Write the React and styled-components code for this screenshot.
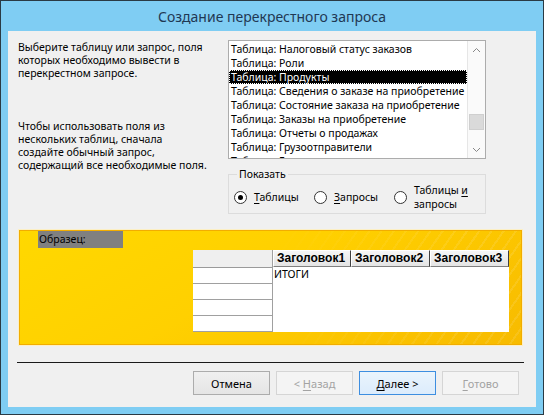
import styled, { createGlobalStyle } from "styled-components";

const GlobalStyle = createGlobalStyle`
  html, body {
    margin: 0;
    padding: 0;
    background: #ffffff;
  }
  body {
    font-family: "Noto Sans", "DejaVu Sans", sans-serif;
  }
`;

const Window = styled.div`
  width: 544px;
  height: 415px;
  box-sizing: border-box;
  border: 1px solid #2a3a44;
  background: #7fcdf3;
  padding: 0 7px 7px 7px;
  display: flex;
  flex-direction: column;
`;

const TitleBar = styled.div`
  height: 30px;
  display: flex;
  align-items: center;
  justify-content: center;
  font-size: 14px;
  color: #1f3853;
  padding-top: 1px;
  box-sizing: border-box;
`;

const Client = styled.div`
  flex: 1;
  background: #f0f0f0;
  display: flex;
  flex-direction: column;
  padding-top: 9px;
  box-sizing: border-box;
  font-size: 10.5px;
  color: #000;
`;

const Top = styled.div`
  display: grid;
  grid-template-columns: 210px 258px;
  padding-left: 10px;
`;

const Hint = styled.p`
  margin: ${(p) => (p.$gap ? "39px" : "0")} 0 0 0;
  line-height: 13px;
  padding-top: 1px;
`;

const RightCol = styled.div`
  display: flex;
  flex-direction: column;
`;

const ListBox = styled.div`
  height: 119px;
  box-sizing: border-box;
  border: 1px solid #acacac;
  background: #fff;
  display: flex;
  overflow: hidden;
`;

const Items = styled.div`
  flex: 1;
  padding-top: 1px;
  overflow: hidden;
`;

const Item = styled.div`
  height: 14px;
  line-height: 14px;
  padding-left: 2px;
  white-space: nowrap;
  box-sizing: border-box;
  background: ${(p) => (p.$selected ? "#000" : "transparent")};
  color: ${(p) => (p.$selected ? "#fff" : "#000")};
  outline: ${(p) => (p.$selected ? "1px dotted #fff" : "none")};
  outline-offset: -1px;
`;

const ScrollBar = styled.div`
  width: 17px;
  border-left: 1px solid #e6e6e6;
  background: #fafafa;
  display: flex;
  flex-direction: column;
`;

const Arrow = styled.div`
  height: 17px;
  display: flex;
  align-items: center;
  justify-content: center;
  margin-top: ${(p) => (p.$down ? "auto" : "0")};
`;

const Thumb = styled.div`
  height: 16px;
  margin: 56px 1px 0 1px;
  box-sizing: border-box;
  background: #dadada;
  border: 1px solid #cfcfcf;
`;

const GroupBox = styled.fieldset`
  margin: 9px 0 0 0;
  padding: 3px 0 3px 5px;
  border: 1px solid #dcdcdc;
  min-width: 0;
`;

const Legend = styled.legend`
  padding: 0 2px;
  margin-left: 3px;
  line-height: 13px;
  color: #000;
`;

const Options = styled.div`
  display: flex;
  align-items: center;
  height: 26px;
`;

const Option = styled.label`
  width: ${(p) => (p.$wide ? "auto" : "80px")};
  display: flex;
  align-items: center;
  gap: 7px;
  line-height: 14px;
`;

const Radio = styled.span`
  width: 13px;
  height: 13px;
  flex: none;
  box-sizing: border-box;
  border-radius: 50%;
  border: 1px solid #333;
  background: #fff;
  display: flex;
  align-items: center;
  justify-content: center;
  &::after {
    content: "";
    width: 5px;
    height: 5px;
    border-radius: 50%;
    background: ${(p) => (p.$checked ? "#000" : "transparent")};
  }
`;

const U = styled.span`
  text-decoration: underline;
  text-underline-offset: 2px;
`;

const Sample = styled.div`
  position: relative;
  margin: 16px 14px 0 11px;
  height: 115px;
  box-sizing: border-box;
  border: 1px solid #f2ad00;
  box-shadow: 0 0 0 1px #fcefc4;
  background: linear-gradient(150deg, #ffd800 0%, #ffd000 45%, #fbc400 75%, #f7bb00 100%);
  display: flex;
  flex-direction: column;
  &::before {
    content: "";
    position: absolute;
    inset: 0;
    background: repeating-linear-gradient(
      -55deg,
      rgba(255, 255, 255, 0) 0px,
      rgba(255, 255, 255, 0) 8px,
      rgba(255, 255, 255, 0.1) 8px,
      rgba(255, 255, 255, 0.1) 10px
    );
    -webkit-mask-image: linear-gradient(to right, transparent 50%, #000 90%);
    mask-image: linear-gradient(to right, transparent 50%, #000 90%);
  }
`;

const SampleLabel = styled.div`
  position: relative;
  width: 85px;
  height: 17px;
  margin-left: 18px;
  background: #808080;
  color: #000;
  line-height: 17px;
  padding-left: 1px;
  box-sizing: border-box;
`;

const Grid = styled.div`
  position: relative;
  display: flex;
  margin: 2px 0 0 173px;
`;

const RowHeads = styled.div`
  width: 79px;
  display: flex;
  flex-direction: column;
  border-right: 1px solid #a0a0a0;
`;

const Corner = styled.div`
  height: 17px;
  background: #efefef;
  border-bottom: 1px solid #9a9a9a;
`;

const RowHead = styled.div`
  height: 15px;
  background: #fff;
  border-bottom: 1px solid #a0a0a0;
`;

const Columns = styled.div`
  width: 236px;
  display: flex;
  flex-direction: column;
`;

const HeaderRow = styled.div`
  display: flex;
  height: 17px;
`;

const HeaderCell = styled.div`
  width: ${(p) => p.$w}px;
  box-sizing: border-box;
  background: linear-gradient(#f6f6f6, #e4e4e4);
  border-left: 1px solid #fff;
  border-top: 1px solid #fff;
  border-right: 1px solid #404040;
  border-bottom: 1px solid #808080;
  font-family: "Liberation Sans", Arial, sans-serif;
  font-weight: bold;
  font-size: 12px;
  line-height: 15px;
  padding-left: 3px;
  white-space: nowrap;
  overflow: hidden;
`;

const Body = styled.div`
  height: 65px;
  background: #fff;
  padding-left: 1px;
  line-height: 14px;
`;

const Separator = styled.div`
  margin: 17px 12px 0 9px;
  height: 1px;
  background: #1a1a1a;
`;

const Buttons = styled.div`
  display: flex;
  justify-content: flex-end;
  gap: 6px;
  margin: 8px 17px 0 0;
`;

const Button = styled.button`
  width: 77px;
  height: 24px;
  box-sizing: border-box;
  font-family: "Noto Sans", "DejaVu Sans", sans-serif;
  font-size: 11px;
  padding: 0;
  color: ${(p) => (p.disabled ? "#a3a3a3" : "#000")};
  border: 1px solid
    ${(p) => (p.$default ? "#3d8ee0" : p.disabled ? "#d5d5d5" : "#acacac")};
  background: ${(p) =>
    p.$default
      ? "linear-gradient(#eaf4fc, #dcecfc)"
      : p.disabled
      ? "#f4f4f4"
      : "linear-gradient(#f0f0f0, #e5e5e5)"};
`;

const Chevron = ({ down }) => (
  <svg width="9" height="6" viewBox="0 0 9 6">
    <path
      d={down ? "M1 1 L4.5 4.5 L8 1" : "M1 5 L4.5 1.5 L8 5"}
      fill="none"
      stroke="#888"
      strokeWidth="1"
    />
  </svg>
);

const tables = [
  "Таблица: Налоговый статус заказов",
  "Таблица: Роли",
  "Таблица: Продукты",
  "Таблица: Сведения о заказе на приобретение",
  "Таблица: Состояние заказа на приобретение",
  "Таблица: Заказы на приобретение",
  "Таблица: Отчеты о продажах",
  "Таблица: Грузоотправители",
  "Таблица: Главная",
];

export default function App() {
  return (
    <>
      <GlobalStyle />
      <Window>
        <TitleBar>Создание перекрестного запроса</TitleBar>
        <Client>
          <Top>
            <div>
              <Hint>
                Выберите таблицу или запрос, поля
                <br />
                которых необходимо вывести в
                <br />
                перекрестном запросе.
              </Hint>
              <Hint $gap>
                Чтобы использовать поля из
                <br />
                нескольких таблиц, сначала
                <br />
                создайте обычный запрос,
                <br />
                содержащий все необходимые поля.
              </Hint>
            </div>
            <RightCol>
              <ListBox>
                <Items>
                  {tables.map((t, i) => (
                    <Item key={t} $selected={i === 2}>
                      {t}
                    </Item>
                  ))}
                </Items>
                <ScrollBar>
                  <Arrow>
                    <Chevron />
                  </Arrow>
                  <Thumb />
                  <Arrow $down>
                    <Chevron down />
                  </Arrow>
                </ScrollBar>
              </ListBox>
              <GroupBox>
                <Legend>Показать</Legend>
                <Options>
                  <Option>
                    <Radio $checked />
                    <span>
                      <U>Т</U>аблицы
                    </span>
                  </Option>
                  <Option>
                    <Radio />
                    <span>
                      <U>З</U>апросы
                    </span>
                  </Option>
                  <Option $wide>
                    <Radio />
                    <span>
                      Таблицы <U>и</U>
                      <br />
                      запросы
                    </span>
                  </Option>
                </Options>
              </GroupBox>
            </RightCol>
          </Top>
          <Sample>
            <SampleLabel>Образец:</SampleLabel>
            <Grid>
              <RowHeads>
                <Corner />
                <RowHead />
                <RowHead />
                <RowHead />
                <RowHead />
              </RowHeads>
              <Columns>
                <HeaderRow>
                  <HeaderCell $w={78}>Заголовок1</HeaderCell>
                  <HeaderCell $w={79}>Заголовок2</HeaderCell>
                  <HeaderCell $w={79}>Заголовок3</HeaderCell>
                </HeaderRow>
                <Body>ИТОГИ</Body>
              </Columns>
            </Grid>
          </Sample>
          <Separator />
          <Buttons>
            <Button>Отмена</Button>
            <Button disabled>
              &lt; <U>Н</U>азад
            </Button>
            <Button $default>
              <U>Д</U>алее &gt;
            </Button>
            <Button disabled>
              <U>Г</U>отово
            </Button>
          </Buttons>
        </Client>
      </Window>
    </>
  );
}
